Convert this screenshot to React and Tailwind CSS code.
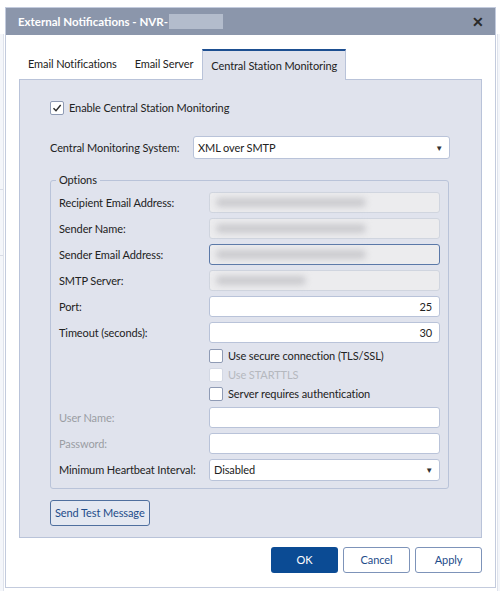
function Check({ checked, disabled }) {
  return (
    <span
      className={`flex h-[14px] w-[14px] shrink-0 items-center justify-center rounded-[2px] border bg-white ${
        disabled ? 'border-[#d3d8e4]' : 'border-[#8f9bb5]'
      }`}
    >
      {checked && (
        <svg width="10" height="10" viewBox="0 0 10 10">
          <path d="M1.5 5.2 L4 7.8 L8.7 2" fill="none" stroke="#2b2b2b" strokeWidth="1.4" />
        </svg>
      )}
    </span>
  );
}

function Blur({ w, focus }) {
  return (
    <div
      className={`flex h-[21px] w-[231px] items-center rounded-[3px] border bg-[#ececee] px-[6px] ${
        focus ? 'border-[#5a78a8]' : 'border-[#d0d5df]'
      }`}
    >
      <div className={`h-[9px] rounded-full bg-[#cacace] blur-[3px] ${w}`} />
    </div>
  );
}

function Field({ children }) {
  return (
    <div className="flex h-[21px] w-[231px] items-center justify-end rounded-[3px] border border-[#b9c3d9] bg-white px-[7px] text-[#222]">
      {children}
    </div>
  );
}

function Row({ label, dim, children }) {
  return (
    <div className="flex items-center">
      <div className={`w-[150px] whitespace-nowrap ${dim ? 'text-[#9a9da3]' : 'text-[#222]'}`}>{label}</div>
      {children}
    </div>
  );
}

export default function App() {
  return (
    <div
      className="relative h-[591px] w-[500px] overflow-hidden bg-white text-[11px] leading-[16px] tracking-[-0.1px]"
      style={{ fontFamily: 'Lato, "Noto Sans", sans-serif' }}
    >
      {/* page behind the dialog */}
      <div className="absolute left-0 top-[34px] h-[560px] w-[4px] border-r border-[#dfe3ec] bg-[#f4f6fa]">
        <div className="mt-[155px] h-px bg-[#d8dce6]" />
        <div className="mt-[65px] h-px bg-[#d8dce6]" />
      </div>
      <div className="absolute right-0 top-[34px] h-[560px] w-[3px] border-l border-[#dfe3ec] bg-[#f4f6fa]" />

      <div className="pl-[5px] pt-[7px]">
        <div className="flex h-[581px] w-[491px] flex-col border border-[#c3cbdd] bg-white">
          {/* title bar */}
          <div className="flex h-[27px] shrink-0 items-center justify-between bg-[#8b96ab] pl-[12px] pr-[11px]">
            <div className="flex items-center text-[11.5px] font-bold tracking-normal text-white">
              <span>External Notifications - NVR-</span>
              <span className="ml-[1px] h-[15px] w-[54px] bg-[#b3bccc]" />
            </div>
            <span className="text-[14px] font-bold leading-none text-[#2a2a2a]">✕</span>
          </div>

          {/* tabs */}
          <div className="mt-[13px] flex h-[31px] shrink-0 items-end pl-[13px]">
            <div className="flex h-[30px] items-center px-[9px] text-[#222]">Email Notifications</div>
            <div className="flex h-[30px] items-center px-[9px] text-[#222]">Email Server</div>
            <div className="relative z-10 -mb-px flex h-[31px] items-center border-x border-t-2 border-x-[#b9c3d9] border-t-[#1d4f91] bg-[#e0e3ed] px-[8px] text-[#222]">
              Central Station Monitoring
            </div>
          </div>

          {/* panel */}
          <div className="ml-[13px] h-[459px] w-[463px] shrink-0 border border-[#b9c3d9] bg-[#e0e3ed] pl-[30px] pr-[31px] pt-[20px]">
            <div className="flex items-center gap-[5px] text-[#222]">
              <Check checked />
              <span>Enable Central Station Monitoring</span>
            </div>

            <div className="mt-[20px] flex items-center">
              <div className="w-[143px] whitespace-nowrap text-[#222]">Central Monitoring System:</div>
              <div className="flex h-[23px] flex-1 items-center justify-between rounded-[3px] border border-[#b9c3d9] bg-white pl-[4px] pr-[6px] text-[#222]">
                <span>XML over SMTP</span>
                <span className="text-[8px] text-[#333]">▼</span>
              </div>
            </div>

            {/* options group */}
            <div className="relative mt-[21px] h-[309px] w-[399px] rounded-[3px] border border-[#b9c3d9] pl-[8px] pt-[11px]">
              <span className="absolute -top-[9px] left-[5px] bg-[#e0e3ed] px-[3px] text-[#222]">Options</span>
              <div className="flex flex-col gap-[5px]">
                <Row label="Recipient Email Address:">
                  <Blur w="w-[150px]" />
                </Row>
                <Row label="Sender Name:">
                  <Blur w="w-[150px]" />
                </Row>
                <Row label="Sender Email Address:">
                  <Blur w="w-[150px]" focus />
                </Row>
                <Row label="SMTP Server:">
                  <Blur w="w-[90px]" />
                </Row>
                <Row label="Port:">
                  <Field>25</Field>
                </Row>
                <Row label="Timeout (seconds):">
                  <Field>30</Field>
                </Row>
                <div className="ml-[150px] flex flex-col gap-[3px]">
                  <div className="flex items-center gap-[5px] text-[#222]">
                    <Check />
                    <span>Use secure connection (TLS/SSL)</span>
                  </div>
                  <div className="flex items-center gap-[5px] text-[#b5b8be]">
                    <Check disabled />
                    <span>Use STARTTLS</span>
                  </div>
                  <div className="flex items-center gap-[5px] text-[#222]">
                    <Check />
                    <span>Server requires authentication</span>
                  </div>
                </div>
                <Row label="User Name:" dim>
                  <Field />
                </Row>
                <Row label="Password:" dim>
                  <Field />
                </Row>
                <Row label="Minimum Heartbeat Interval:">
                  <div className="flex h-[22px] w-[231px] items-center justify-between rounded-[3px] border border-[#b9c3d9] bg-white pl-[4px] pr-[6px] text-[#222]">
                    <span>Disabled</span>
                    <span className="text-[8px] text-[#333]">▼</span>
                  </div>
                </Row>
              </div>
            </div>

            <button className="mt-[11px] flex h-[26px] items-center whitespace-nowrap rounded-[3px] border border-[#4f6f9e] bg-[#e4e8f1] px-[4px] text-[#1e4c8a]">
              Send Test Message
            </button>
          </div>

          {/* footer */}
          <div className="mt-[9px] flex justify-end gap-[5px] pr-[13px]">
            <button className="h-[26px] w-[67px] rounded-[3px] bg-[#0b4b94] text-white">OK</button>
            <button className="h-[26px] w-[67px] rounded-[3px] border border-[#7d93b9] bg-white text-[#1e4c8a]">
              Cancel
            </button>
            <button className="h-[26px] w-[67px] rounded-[3px] border border-[#7d93b9] bg-white text-[#1e4c8a]">
              Apply
            </button>
          </div>
        </div>
      </div>
    </div>
  );
}
